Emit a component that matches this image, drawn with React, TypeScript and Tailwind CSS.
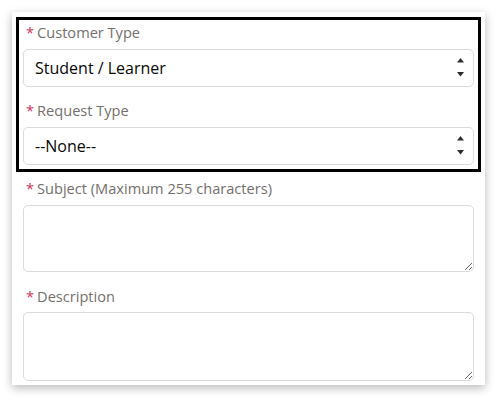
import React from 'react';

const font = { fontFamily: '"Open Sans", "Noto Sans", sans-serif' };

function Label({ text }: { text: string }) {
  return (
    <div className="flex items-center h-[20px] pl-[3px] text-[14.6px] leading-[20px] text-[#736f6c]">
      <abbr className="no-underline text-[#d2335c] mr-[3px]" title="required">*</abbr>
      <span>{text}</span>
    </div>
  );
}

function SelectBox({ value }: { value: string }) {
  return (
    <div className="relative">
      <select
        defaultValue={value}
        className="appearance-none w-full h-[38px] rounded-[5px] border border-[#dddbda] bg-white pl-[11px] pr-8 text-[16px] text-[#080707] outline-none"
      >
        <option>{value}</option>
      </select>
      {/* up/down arrows */}
      <svg className="pointer-events-none absolute right-[10px] top-[9px]" width="7" height="20" viewBox="0 0 7 20">
        <path d="M3.5 0 L7 4.5 L0 4.5 Z" fill="#2b2b2b" />
        <path d="M0 14 L7 14 L3.5 18.5 Z" fill="#2b2b2b" />
      </svg>
    </div>
  );
}

export default function App() {
  return (
    <div className="w-[503px] h-[404px] bg-white pt-[12px] pl-[12px]" style={font}>
      <div className="w-[473px] h-[373px] bg-white shadow-[0_3px_9px_rgba(0,0,0,0.28)] px-[4px] pt-[5px]">
        {/* highlighted section */}
        <div className="border-[3px] border-black px-[4px] pt-[2px] pb-[4px]">
          <Label text="Customer Type" />
          <div className="mt-[7px]">
            <SelectBox value="Student / Learner" />
          </div>
          <div className="mt-[13px]">
            <Label text="Request Type" />
          </div>
          <div className="mt-[7px]">
            <SelectBox value="--None--" />
          </div>
        </div>

        <div className="px-[7px]">
          <div className="mt-[6px]">
            <Label text="Subject (Maximum 255 characters)" />
          </div>
          <textarea className="block mt-[7px] w-full h-[67px] rounded-[5px] border border-[#dddbda] bg-white outline-none" />
          <div className="mt-[14px]">
            <Label text="Description" />
          </div>
          <textarea className="block mt-[6px] w-full h-[69px] rounded-[5px] border border-[#dddbda] bg-white outline-none" />
        </div>
      </div>
    </div>
  );
}
